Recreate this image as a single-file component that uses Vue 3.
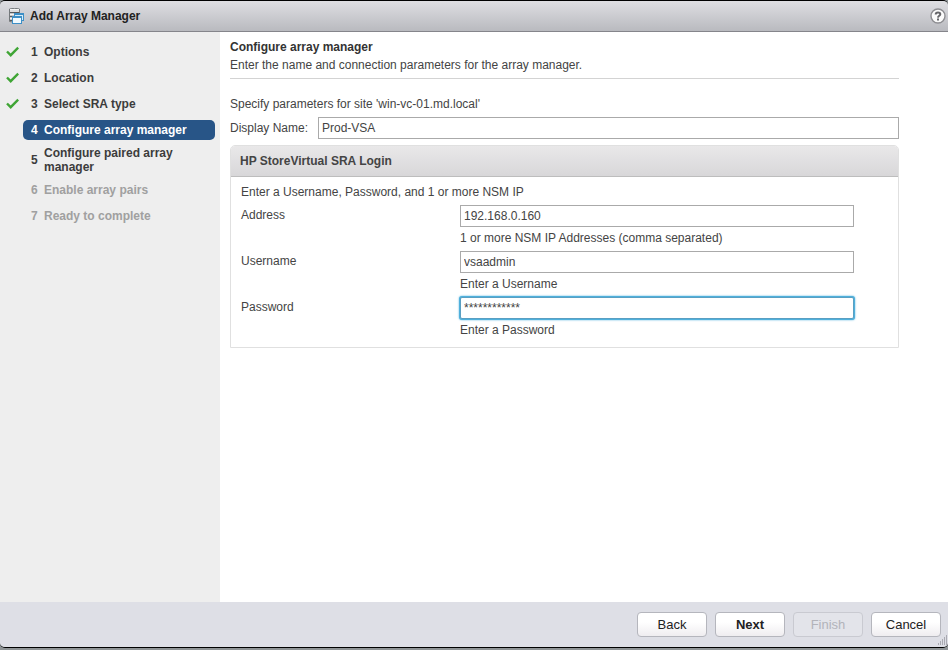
<script setup>
import { ref } from 'vue'

const steps = [
    { title: 'Options', state: 'done' },
    { title: 'Location', state: 'done' },
    { title: 'Select SRA type', state: 'done' },
    { title: 'Configure array manager', state: 'current' },
    { title: 'Configure paired array manager', state: 'next' },
    { title: 'Enable array pairs', state: 'disabled' },
    { title: 'Ready to complete', state: 'disabled' },
]

const displayName = ref('Prod-VSA')

const fields = ref([
    { id: 'address', label: 'Address', value: '192.168.0.160', hint: '1 or more NSM IP Addresses (comma separated)' },
    { id: 'username', label: 'Username', value: 'vsaadmin', hint: 'Enter a Username' },
    { id: 'password', label: 'Password', value: '************', hint: 'Enter a Password', active: true },
])
</script>

<template>
    <div class="backdrop">
        <div class="dialog">
            <header class="titlebar">
                <svg class="titlebar-icon" width="16" height="16" viewBox="0 0 16 16">
                    <path d="M1.5 1Q6.500 -0.500 11.500 1V13.500Q6.500 15 1.500 13.500Z" fill="#c4c7c9" stroke="#74787b" />
                    <path d="M2 1.500h9M2 3h9M2 6.500h9M2 10.500h6" stroke="#f4f4f4" />
                    <path d="M2 4.500h9M2 8.500h9M2 12.500h6" stroke="#55595c" />
                    <rect x="6" y="5" width="10" height="8" fill="#3d8fc6" />
                    <rect x="7" y="7" width="8" height="5" fill="#d5ecf9" />
                    <rect x="4" y="8" width="10" height="8" fill="#3d8fc6" />
                    <rect x="5" y="10" width="8" height="5" fill="#f0f9fe" />
                </svg>
                <h1>Add Array Manager</h1>
                <button class="help" type="button" aria-label="Help">
                    <svg width="16" height="16" viewBox="0 0 16 16">
                        <circle cx="8" cy="8" r="7" fill="#fbfbfb" stroke="#8e8e92" stroke-width="1.4" />
                        <path d="M5.7 6.4C5.7 3.7 10.4 3.8 10.3 6.3C10.2 7.8 8.1 7.8 8 9.600" fill="none" stroke="#66666a" stroke-width="2" />
                        <rect x="7" y="10.500" width="2" height="2" fill="#66666a" />
                    </svg>
                </button>
            </header>

            <div class="body">
                <nav class="steps">
                    <ol>
                        <li v-for="(step, index) in steps" :key="index" class="step" :class="step.state">
                            <span class="step-mark">
                                <svg v-if="step.state === 'done'" width="14" height="12" viewBox="0 0 14 12">
                                    <path d="M2 5.500L5.700 9.200L13.200 1.700" fill="none" stroke="#3fa535" stroke-width="2.400" />
                                </svg>
                            </span>
                            <span class="step-label">
                                <span class="step-number">{{ index + 1 }}</span>
                                <span>{{ step.title }}</span>
                            </span>
                        </li>
                    </ol>
                </nav>

                <main class="content">
                    <div class="intro">
                        <h2>Configure array manager</h2>
                        <p>Enter the name and connection parameters for the array manager.</p>
                    </div>
                    <p class="site">Specify parameters for site 'win-vc-01.md.local'</p>
                    <div class="name-row">
                        <label for="display-name">Display Name:</label>
                        <input id="display-name" v-model="displayName" type="text">
                    </div>

                    <section class="panel">
                        <h3>HP StoreVirtual SRA Login</h3>
                        <div class="panel-body">
                            <p>Enter a Username, Password, and 1 or more NSM IP</p>
                            <div v-for="field in fields" :key="field.id" class="field">
                                <label :for="field.id">{{ field.label }}</label>
                                <div class="field-control">
                                    <input :id="field.id" v-model="field.value" type="text" autocomplete="off" :class="{ active: field.active }">
                                    <p>{{ field.hint }}</p>
                                </div>
                            </div>
                        </div>
                    </section>
                </main>
            </div>

            <footer class="actions">
                <button type="button">Back</button>
                <button type="button" class="primary">Next</button>
                <button type="button" disabled>Finish</button>
                <button type="button">Cancel</button>
                <svg class="grip" width="10" height="10" viewBox="0 0 10 10">
                    <path d="M8 0h1M6 2h1M8 2h1M4 4h1M6 4h1M8 4h1M2 6h1M4 6h1M6 6h1M8 6h1M0 8h1M2 8h1M4 8h1M6 8h1M8 8h1" transform="translate(0 1)" stroke="#77777f" stroke-width="1" />
                </svg>
            </footer>
        </div>
    </div>
</template>

<style>
body {
    margin: 0;
}
</style>

<style scoped>
.backdrop {
    box-sizing: border-box;
    min-height: 100vh;
    display: flex;
    padding-bottom: 2px;
    background: #8f9496;
    color: #444;
    font-family: "Liberation Sans", Arial, sans-serif;
    font-size: 12px;
    line-height: 18px;
}
h1,
h2,
h3,
p,
ol {
    margin: 0;
    padding: 0;
    font-size: 12px;
}
.dialog {
    flex: 1;
    display: flex;
    flex-direction: column;
    border-top: 1px solid #000;
    border-bottom: 1px solid #000;
    border-radius: 5px;
    overflow: hidden;
}
.titlebar {
    display: flex;
    align-items: center;
    height: 30px;
    padding: 0 2px 0 8px;
    border-bottom: 1px solid #85858b;
    background: linear-gradient(#dedee2, #b9babf);
}
.titlebar h1 {
    flex: 1;
    margin-left: 6px;
    color: #222;
}
.help {
    display: flex;
    padding: 0;
    border: 0;
    background: none;
}
.body {
    flex: 1;
    display: flex;
    background: #fff;
}
.steps {
    box-sizing: border-box;
    flex: none;
    width: 220px;
    padding: 7px 5px 0 5px;
    background: #eee;
}
.steps ol {
    list-style: none;
}
.step {
    display: flex;
    align-items: center;
    min-height: 26px;
    color: #3c3c3c;
    font-weight: bold;
    line-height: 14px;
}
.step-mark {
    display: flex;
    flex: none;
    width: 18px;
}
.step-label {
    flex: 1;
    display: flex;
    align-items: center;
    padding: 3px 8px;
    border-radius: 5px;
}
.step-number {
    flex: none;
    width: 13px;
}
.step.current .step-label {
    background: #285587;
    color: #fff;
}
.step.disabled {
    color: #a0a0a0;
}
.content {
    flex: 1;
    min-width: 0;
    padding: 6px 49px 0 10px;
}
.intro {
    padding-bottom: 4px;
    border-bottom: 1px solid #d3d3d3;
}
.intro h2 {
    color: #333;
}
.site {
    margin-top: 16px;
}
input {
    box-sizing: border-box;
    width: 100%;
    height: 22px;
    padding: 0 3px;
    border: 1px solid #aaa;
    outline: 0;
    background: #fff;
    color: #444;
    font: inherit;
}
.name-row {
    display: flex;
    align-items: center;
    gap: 7px;
    margin-top: 4px;
}
.name-row label {
    flex: none;
    width: 81px;
}
.panel {
    margin-top: 6px;
    border: 1px solid #e0e0e0;
    border-radius: 5px 5px 0 0;
}
.panel h3 {
    padding: 6px 9px;
    border-bottom: 1px solid #bdbdbd;
    border-radius: 4px 4px 0 0;
    background: linear-gradient(#e9e8e9, #d8d7d9);
    color: #444;
}
.panel-body {
    padding: 6px 44px 8px 10px;
}
.field {
    display: flex;
    margin-top: 4px;
}
.field label {
    flex: none;
    width: 219px;
    line-height: 20px;
}
.field-control {
    flex: 1;
}
.field-control input {
    display: block;
}
.field-control input.active {
    border-color: #5a9fc2;
    border-radius: 2px;
    box-shadow: 0 0 0 1px #4fb0dc, 0 0 2px 1px #4fb0dc;
}
.field-control p {
    margin-top: 2px;
}
.actions {
    position: relative;
    display: flex;
    align-items: center;
    justify-content: flex-end;
    gap: 8px;
    height: 45px;
    padding: 0 7px;
    background: #dedfe6;
}
.actions button {
    width: 70px;
    height: 25px;
    padding: 0;
    border: 1px solid #b5b6bd;
    border-radius: 4px;
    background: linear-gradient(#fff 40%, #efedf0);
    color: #222;
    font: inherit;
    font-size: 13px;
}
.actions button.primary {
    font-weight: bold;
}
.actions button:disabled {
    border-color: #c9cad1;
    background: #e3e4ea;
    color: #b2b3ba;
}
.grip {
    position: absolute;
    right: 0;
    bottom: 2px;
}
</style>
